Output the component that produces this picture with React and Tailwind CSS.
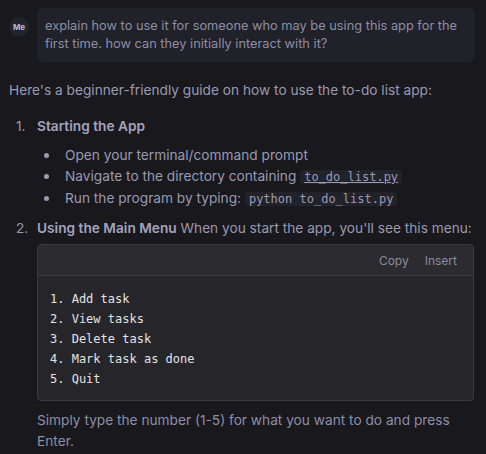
const mono = "font-['DejaVu_Sans_Mono',monospace]"

function Num({ n, children }) {
  return (
    <div className="flex">
      <span className="w-[28px] shrink-0 pl-[7px]">{n}.</span>
      <div className="min-w-0 flex-1">{children}</div>
    </div>
  )
}

function Bullet({ children }) {
  return (
    <div className="flex items-baseline">
      <span className="flex w-[28px] shrink-0 pl-[7px]">
        <span className="h-[5px] w-[5px] -translate-y-[2px] rounded-full bg-[#9a9ab2]" />
      </span>
      <div>{children}</div>
    </div>
  )
}

export default function App() {
  const menu = ['1. Add task', '2. View tasks', '3. Delete task', '4. Mark task as done', '5. Quit']

  return (
    <div className="h-[454px] w-[486px] overflow-hidden bg-[#18181d] font-['Inter',sans-serif] text-[13.7px] text-[#9a9ab2]">
      {/* user message */}
      <div className="flex gap-2 pt-2 pr-[11px] pl-[9px]">
        <div className="mt-[9px] flex h-5 w-5 shrink-0 items-center justify-center rounded-full bg-[#23232d] text-[8px] font-bold text-[#b9b9d6]">
          Me
        </div>
        <div className="flex-1 rounded-md bg-[#212129] px-2 py-[9px] text-[12.8px] leading-[18px] text-[#8e8ea6]">
          explain how to use it for someone who may be using this app for the first time. how can they initially interact with it?
        </div>
      </div>

      {/* reply */}
      <div className="pt-[18px] pr-3 pl-[9px] leading-[21px]">
        <p>Here's a beginner-friendly guide on how to use the to-do list app:</p>

        <div className="mt-[15px] flex flex-col gap-2">
          <Num n={1}>
            <span className="font-semibold text-[#a3a3be]">Starting the App</span>
            <div className="mt-2 flex flex-col">
              <Bullet>Open your terminal/command prompt</Bullet>
              <Bullet>
                Navigate to the directory containing{' '}
                <code className={`rounded bg-[#22222b] px-1 ${mono} text-[12px] underline`}>to_do_list.py</code>
              </Bullet>
              <Bullet>
                Run the program by typing:{' '}
                <code className={`rounded bg-[#22222b] px-1 ${mono} text-[12px]`}>python to_do_list.py</code>
              </Bullet>
            </div>
          </Num>
          <Num n={2}>
            <span className="font-semibold text-[#a3a3be]">Using the Main Menu</span> When you start the app, you'll see this menu:
            <div className="mt-[5px] overflow-hidden rounded-[4px] border border-[#3a3a44] bg-[#26262a]">
              <div className="flex h-[31px] items-center justify-end gap-4 border-b border-[#3a3a44] bg-[#2b2b30] pr-4 text-[12px] text-[#8a8aa0]">
                <span>Copy</span>
                <span>Insert</span>
              </div>
              <pre className={`px-3 pt-[13px] pb-[11px] ${mono} text-[12px] leading-5 text-[#e2e2e6]`}>
                {menu.join('\n')}
              </pre>
            </div>
            <p className="mt-[9px] text-[#8e8ea8]">Simply type the number (1-5) for what you want to do and press Enter.</p>
          </Num>
        </div>
      </div>
    </div>
  )
}
